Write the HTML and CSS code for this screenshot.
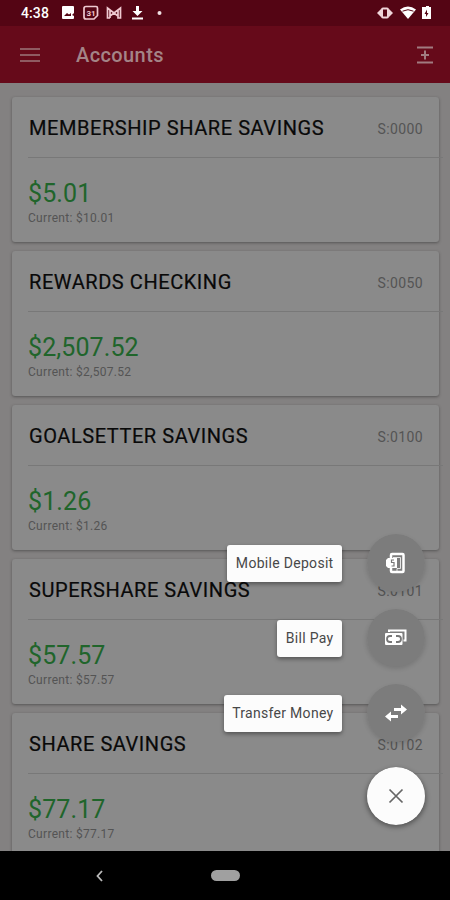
FILE: index.html
```html
<!DOCTYPE html>
<html lang="en">
<head>
<meta charset="utf-8">
<title>Accounts</title>
<link rel="stylesheet" href="styles.css">
</head>
<body>
<div class="phone">
  <div class="status">
    <span class="clock">4:38</span>
    <svg class="notices" width="104" height="16" viewBox="0 0 104 16">
      <path fill="#fff" fill-rule="evenodd" d="M2 1h9a1 1 0 0 1 1 1v6l-2 2 2 1v2a1 1 0 0 1-1 1H1a1 1 0 0 1-1-1V2a1 1 0 0 1 1-1zM2 11h7V8L7 9.500 5 8z"/>
      <path fill="none" stroke="#efc9d0" stroke-width="1.700" d="M24 1.500h10a1.500 1.500 0 0 1 1.500 1.500v7.500L32 14h-8a2 2 0 0 1-2-2V3.500a2 2 0 0 1 2-2z"/>
      <text x="24.500" y="11" class="day">31</text>
      <path fill="none" stroke="#efc9d0" stroke-width="1.700" d="M48 13h-2.500V3L52 8l6.500-5v10H56V5M48 13V5M48 11l4-3 4 3"/>
      <path fill="#fff" d="M74 1h3v5h3.500l-5 5-5-5H74zM70 12.500h11v2H70z"/>
      <circle cx="97.500" cy="8" r="2" fill="#efdfe2"/>
    </svg>
    <svg class="signals" width="56" height="16" viewBox="0 0 56 16">
      <path fill="#efd5d9" d="M0 8l4-4v8zM16 8l-4-4v8z"/>
      <rect x="5" y="3.500" width="6" height="9" rx="1" fill="none" stroke="#efd5d9" stroke-width="2"/>
      <path fill="#fff" d="M23 4.500q8-6 16 0L31 14z"/>
      <path fill="none" stroke="#540514" stroke-width="1" d="M25.500 6.200q5.500-3 11 0"/>
      <path fill="#fff" d="M47 2h2V1h3v1h2v12h-9V2z"/>
      <path fill="#540514" d="M50 4.500L47.500 9H49v3l2.500-4H50z"/>
    </svg>
  </div>
  <header class="appbar">
    <svg width="20" height="16" viewBox="0 0 20 16"><path stroke="#9d777b" stroke-width="1.700" d="M0 2h20M0 8h20M0 14h20"/></svg>
    <h1>Accounts</h1>
    <svg class="expand" width="16" height="18" viewBox="0 0 16 18"><path fill="none" stroke="#a17b80" stroke-width="2" d="M0 1.500h16M0 16.500h16M8 4.500v9M4 9h8"/></svg>
  </header>
  <main class="list">
    <section class="card"><div class="head"><h2>MEMBERSHIP SHARE SAVINGS</h2><span>S:0000</span></div><div class="money">$5.01</div><div class="current">Current: $10.01</div></section>
    <section class="card"><div class="head"><h2>REWARDS CHECKING</h2><span>S:0050</span></div><div class="money">$2,507.52</div><div class="current">Current: $2,507.52</div></section>
    <section class="card"><div class="head"><h2>GOALSETTER SAVINGS</h2><span>S:0100</span></div><div class="money">$1.26</div><div class="current">Current: $1.26</div></section>
    <section class="card"><div class="head"><h2>SUPERSHARE SAVINGS</h2><span>S:0101</span></div><div class="money">$57.57</div><div class="current">Current: $57.57</div></section>
    <section class="card"><div class="head"><h2>SHARE SAVINGS</h2><span>S:0102</span></div><div class="money">$77.17</div><div class="current">Current: $77.17</div></section>
  </main>
  <nav class="navbar">
    <svg width="8" height="12" viewBox="0 0 8 12"><path fill="none" stroke="#bbb" stroke-width="1.800" d="M6 1L1.500 6 6 11"/></svg>
    <span class="pill"></span>
  </nav>
  <div class="actions">
    <div class="action"><span class="label">Mobile Deposit</span><span class="fab">
      <svg width="22" height="24" viewBox="0 0 22 24"><path fill="none" stroke="#fff" stroke-width="2.500" d="M6 7V4a1 1 0 0 1 1-1h10.500a1 1 0 0 1 1 1v16a1 1 0 0 1-1 1H7a1 1 0 0 1-1-1v-3"/><path fill="none" stroke="#fff" stroke-width=".8" d="M8 6.500h7.500v11H12v3"/><path fill="#fff" d="M3 7h9v10H3l-2-2V9z"/><path fill="none" stroke="#777" stroke-width="1.200" d="M9 9H6.500v2.500H9V15H6.500"/></svg></span></div>
    <div class="action"><span class="label">Bill Pay</span><span class="fab">
      <svg width="24" height="20" viewBox="0 0 24 20"><path fill="none" stroke="#fff" stroke-width="2" d="M5 4V2.500h16.500v10h-2"/><rect x="1" y="5" width="17.500" height="12" rx="1" fill="#fff"/><path fill="none" stroke="#777" stroke-width="1.800" d="M8 8H6a3 3 0 0 0 0 6h2M12 8h2a3 3 0 0 1 0 6h-2"/></svg></span></div>
    <div class="action"><span class="label">Transfer Money</span><span class="fab">
      <svg width="22" height="20" viewBox="0 0 22 20"><path fill="#fff" d="M9 5h7V1.500l6 5-6 5V8H9zM13 12H6V8.500l-6 5 6 5V15h7z"/></svg></span></div>
    <div class="action"><span class="fab close">
      <svg width="16" height="16" viewBox="0 0 16 16"><path stroke="#666" stroke-width="1.700" d="M1.500 1.500l13 13M14.500 1.500l-13 13"/></svg></span></div>
  </div>
</div>
</body>
</html>
```
FILE: styles.css
```css
* { box-sizing: border-box; }
body { margin: 0; font-family: Roboto, sans-serif; }
svg { display: block; flex: none; }
.phone { position: relative; width: 450px; height: 900px; display: flex; flex-direction: column; overflow: hidden; background: #838181; }
.status { height: 26px; flex: none; display: flex; align-items: center; padding: 0 18px 0 21px; background: #540514; color: #fff; }
.clock { width: 41px; font-size: 14px; font-weight: 500; letter-spacing: .1px; }
.day { font: 700 8px Roboto, sans-serif; fill: #efc9d0; }
.signals { margin-left: auto; margin-right: -1px; }
.appbar { height: 57px; flex: none; display: flex; align-items: center; padding: 1px 17px 0 20px; background: #660a1a; }
.appbar h1 { margin: 0 0 0 36px; font-size: 20px; font-weight: 500; letter-spacing: .4px; color: #a48487; }
.expand { margin-left: auto; }
.list { flex: 1; min-height: 0; overflow: hidden; padding: 14px 11px 0 12px; display: flex; flex-direction: column; gap: 9px; }
.card { height: 145px; flex: none; padding-left: 16px; border-radius: 3px; background: #8a8a8a; box-shadow: 0 1px 3px rgba(0,0,0,.35); }
.head { height: 61px; margin-right: -4px; padding: 1px 20px 0 1px; display: flex; align-items: center; justify-content: space-between; border-bottom: 1px solid #787878; }
.head h2 { margin: 0; font-size: 20px; font-weight: 400; line-height: 24px; letter-spacing: .56px; color: #090909; -webkit-text-stroke: .2px #090909; white-space: nowrap; }
.head span { padding-top: 3px; font-size: 14px; letter-spacing: .4px; color: #545454; }
.money { margin-top: 21px; font-size: 25px; line-height: 30px; letter-spacing: .1px; color: #20652b; }
.current { margin-top: 2px; font-size: 12px; line-height: 14px; letter-spacing: .3px; color: #545454; }
.navbar { height: 49px; flex: none; display: flex; align-items: center; padding-left: 96px; background: #000; }
.pill { width: 29px; height: 11px; margin-left: 107px; border-radius: 6px; background: #a0a0a0; }
.actions { position: absolute; right: 24px; top: 533px; display: flex; flex-direction: column; gap: 15px; }
.action { height: 60px; display: flex; align-items: center; justify-content: flex-end; gap: 24px; }
.label { height: 37px; padding: 0 8.500px; border-radius: 3px; background: #fcfcfc; box-shadow: 0 2px 4px rgba(0,0,0,.4); font-size: 14px; line-height: 37px; letter-spacing: .3px; color: #484848; white-space: nowrap; }
.fab { width: 60px; height: 58px; border: solid transparent; border-width: 0 1px; background-clip: padding-box; border-radius: 50%; display: flex; align-items: center; justify-content: center; background-color: #7c7c7c; box-shadow: 0 2px 4px rgba(0,0,0,.12); }
.action:last-child { margin-top: 8px; }
.close { background-color: #fcfcfc; box-shadow: 0 2px 5px rgba(0,0,0,.4); }
```
